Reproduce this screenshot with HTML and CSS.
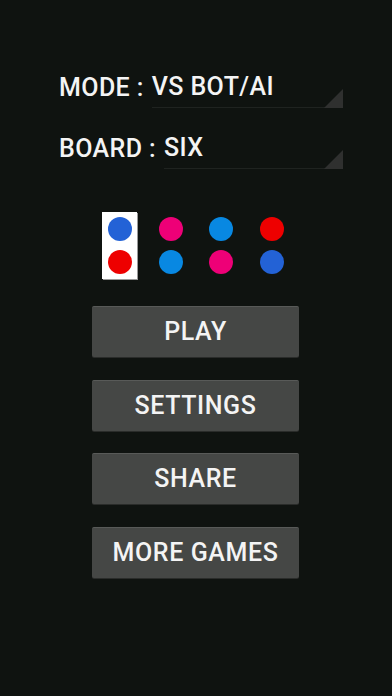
FILE: index.html
```html
<!DOCTYPE html>
<html>
<head>
<meta charset="utf-8">
<link rel="stylesheet" href="styles.css">
</head>
<body>
<div class="screen">
  <div class="row mode-row">
    <span class="label">MODE :</span>
    <div class="spinner"><span class="value">VS BOT/AI</span></div>
  </div>
  <div class="row board-row">
    <span class="label">BOARD :</span>
    <div class="spinner"><span class="value">SIX</span></div>
  </div>

  <div class="palettes">
    <div class="pair selected"><span class="dot blue"></span><span class="dot red"></span></div>
    <div class="pair"><span class="dot pink"></span><span class="dot sky"></span></div>
    <div class="pair"><span class="dot sky"></span><span class="dot pink"></span></div>
    <div class="pair"><span class="dot red"></span><span class="dot blue"></span></div>
  </div>

  <div class="buttons">
    <button class="btn">PLAY</button>
    <button class="btn">SETTINGS</button>
    <button class="btn">SHARE</button>
    <button class="btn">MORE GAMES</button>
  </div>
</div>
</body>
</html>
```
FILE: styles.css
```css
html, body {
  margin: 0;
  padding: 0;
  background: #0f1310;
}
body {
  font-family: Roboto, "Noto Sans", sans-serif;
  color: #f4f4f4;
  width: 392px;
  height: 696px;
  overflow: hidden;
}
.screen {
  display: flex;
  flex-direction: column;
  padding-top: 72px;
}
.row {
  display: flex;
  align-items: flex-end;
  margin-left: 59px;
  margin-right: 49px;
  height: 36px;
}
.board-row {
  margin-top: 25px;
}
.label, .value {
  font-size: 25px;
  font-weight: 500;
  line-height: 32px;
  white-space: nowrap;
  letter-spacing: 0.4px;
}
.label {
  height: 36px;
  display: flex;
  align-items: flex-start;
  margin-right: 8px;
}
.spinner {
  flex: 1;
  position: relative;
  border-bottom: 1px solid #1f2320;
  height: 36px;
  display: flex;
  align-items: flex-start;
}
.spinner::after {
  content: "";
  position: absolute;
  right: 0;
  bottom: -1px;
  width: 0;
  height: 0;
  border-left: 19px solid transparent;
  border-bottom: 19px solid #2f302f;
}
.palettes {
  display: flex;
  justify-content: center;
  gap: 15.7px;
  margin-top: 43px;
}
.pair {
  width: 35px;
  height: 67px;
  box-sizing: border-box;
  padding-top: 5px;
  display: flex;
  flex-direction: column;
  align-items: center;
  gap: 8.7px;
}
.pair.selected {
  background: #ffffff;
  box-shadow: 1px 1px 0 #9a9a9a;
}
.dot {
  width: 24px;
  height: 24px;
  border-radius: 50%;
  display: block;
}
.blue { background: #2362d6; }
.red { background: #ee0000; }
.pink { background: #ee0077; }
.sky { background: #0888e2; }
.buttons {
  display: flex;
  flex-direction: column;
  align-items: center;
  gap: 22.5px;
  margin-top: 27px;
}
.btn {
  width: 207px;
  height: 51px;
  margin-left: -1px;
  background: #454745;
  border: none;
  border-top: 1px solid #585a58;
  border-radius: 2px;
  box-shadow: 0 1px 0 #2a2c2a;
  color: #f4f4f4;
  font-family: Roboto, "Noto Sans", sans-serif;
  font-size: 25px;
  font-weight: 500;
  letter-spacing: 0.6px;
  padding: 0;
  line-height: 50px;
}
```
